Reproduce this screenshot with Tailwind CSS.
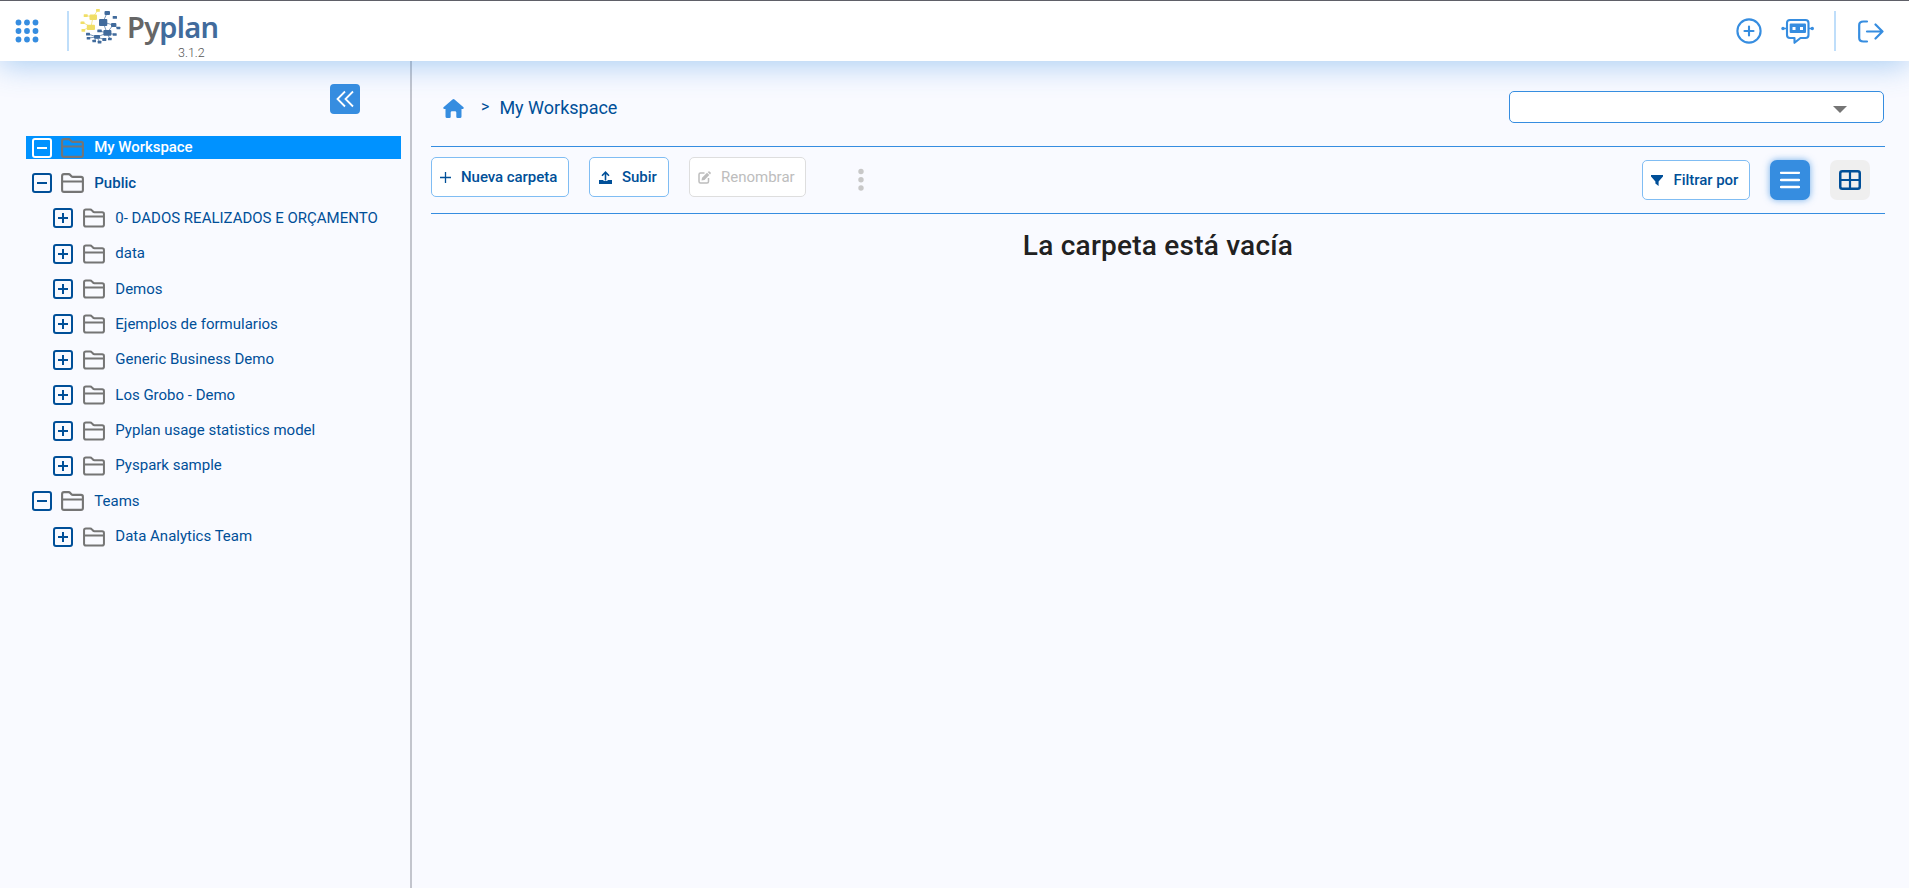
<!DOCTYPE html>
<html lang="es">
<head>
<meta charset="utf-8">
<title>Pyplan</title>
<script src="https://cdn.jsdelivr.net/npm/@tailwindcss/browser@4"></script>
</head>
<body class="h-screen overflow-hidden bg-[#f9faff] font-['Roboto',sans-serif] text-[#004f98] flex flex-col">
<svg class="hidden">
  <symbol id="folder" viewBox="0 0 23 20"><path d="M1.100 17V3Q1.100 1.100 3 1.100H7.500Q8.600 1.100 9.300 2L10.400 3.200Q11 3.900 12 3.900H20Q21.900 3.900 21.900 5.700V17Q21.900 18.900 20 18.900H3Q1.100 18.900 1.100 17ZM1.100 8.500H21.900" fill="none" stroke="#757575" stroke-width="2.100"/></symbol>
  <symbol id="minus" viewBox="0 0 20 20"><rect x="1" y="1" width="18" height="18" rx="2" fill="none" stroke="currentColor" stroke-width="2"/><path d="M5 10H15" stroke="currentColor" stroke-width="2"/></symbol>
  <symbol id="plus" viewBox="0 0 20 20"><rect x="1" y="1" width="18" height="18" rx="2" fill="none" stroke="currentColor" stroke-width="2"/><path d="M5 10H15M10 5V15" stroke="currentColor" stroke-width="2"/></symbol>
</svg>

<header class="relative z-10 h-[61px] shrink-0 bg-white border-t border-[#5f6068] shadow-[0_4px_30px_rgba(54,141,224,0.42)] flex items-start justify-between text-[#368de0]">
  <div class="flex items-start">
    <svg class="ml-[15px] mt-[18px] size-6" viewBox="0 0 24 24" fill="currentColor"><circle cx="3.500" cy="3.500" r="2.900"/><circle cx="12" cy="3.500" r="2.900"/><circle cx="20.500" cy="3.500" r="2.900"/><circle cx="3.500" cy="12" r="2.900"/><circle cx="12" cy="12" r="2.900"/><circle cx="20.500" cy="12" r="2.900"/><circle cx="3.500" cy="20.500" r="2.900"/><circle cx="12" cy="20.500" r="2.900"/><circle cx="20.500" cy="20.500" r="2.900"/></svg>
    <div class="ml-7 mt-[10px] h-10 w-[2px] bg-[#bfdefa]"></div>
    <svg class="ml-[11px] mt-[7px] w-[41px] h-9" viewBox="80 8 41 36">
      <path d="M91 27L93 17L98 10M82 22L91 27L83 30M93 17L86 15.500" stroke="#f0de66" fill="none" stroke-width=".7"/>
      <path d="M107 13L103 22L113 25L118 28M103 22L107 33L113 25M107 33L97 37L88 34M97 37L88 38M107 33L115 34.500M97 37L94 41M97 37L104 39.500M97 37L99.500 42M99.500 31L107 33L110 39" stroke="#416b9c" fill="none" stroke-width=".7"/>
      <g fill="#f0de66"><rect x="89.500" y="14.500" width="7.500" height="5.500" rx="1"/><rect x="86.800" y="24.700" width="8.200" height="5.200" rx="1"/><rect x="96" y="9" width="3.800" height="2.800" rx=".5"/><rect x="83.700" y="14.200" width="4" height="2.800" rx=".5"/><rect x="80.500" y="21.500" width="4" height="2.600" rx=".5"/><rect x="81.500" y="29" width="3.700" height="2.700" rx=".5"/></g>
      <g fill="#416b9c"><rect x="99" y="19" width="8.300" height="7" rx="1"/><rect x="104.500" y="11" width="5.500" height="4" rx="1"/><rect x="112.700" y="16" width="4.300" height="2.700" rx=".5"/><rect x="111" y="23" width="5.400" height="4" rx="1"/><rect x="116.500" y="26.700" width="3.800" height="2.500" rx=".5"/><rect x="103.400" y="30" width="8" height="5.700" rx="1"/><rect x="97.300" y="29.500" width="4.500" height="2.800" rx=".5"/><rect x="94" y="35" width="6" height="3.700" rx=".8"/><rect x="86" y="32.700" width="4" height="2.700" rx=".5"/><rect x="86.700" y="37" width="3.500" height="2.500" rx=".5"/><rect x="92.400" y="39.700" width="3.600" height="2.500" rx=".5"/><rect x="97.700" y="40.700" width="3.700" height="2.700" rx=".5"/><rect x="102.300" y="38" width="4" height="3" rx=".5"/><rect x="108" y="37.700" width="3.700" height="2.500" rx=".5"/><rect x="112.700" y="33.300" width="4" height="2.500" rx=".5"/></g>
    </svg>
    <div class="ml-[6px] mt-[10px] w-[94px]">
      <div class="h-[36px] leading-[31px] text-[29px] font-semibold tracking-[-0.700px] text-[#666] font-['Noto_Sans',sans-serif]">Py<span class="text-[#416b9c]">plan</span></div>
      <div class="pl-[51px] text-[12.500px] leading-3 font-light text-[#555]">3.1.2</div>
    </div>
  </div>
  <div class="flex items-start">
    <svg class="mt-[17px] size-[26px]" viewBox="0 0 26 26" fill="none" stroke="currentColor" stroke-width="2.100" stroke-linecap="round"><circle cx="13" cy="13" r="11.600"/><path d="M8.500 13H17.500M13 8.500V17.500"/></svg>
    <svg class="ml-[19px] mt-[17px] w-[33px] h-[27px]" viewBox="0 0 33 27" fill="none" stroke="currentColor" stroke-width="2.100"><path d="M9 2H24.500Q27.500 2 27.500 5V17Q27.500 20 24.500 20H19.500L13.500 24.800V20H9Q6 20 6 17V5Q6 2 9 2Z" stroke-linejoin="round"/><path d="M2 10.500H6M27 10.500H31" stroke-width="1.500"/><circle cx="2" cy="10.500" r="1.700" fill="currentColor" stroke="none"/><circle cx="31.300" cy="10.500" r="1.700" fill="currentColor" stroke="none"/><rect x="8.700" y="5.500" width="16.300" height="9.500" rx="1" fill="currentColor" stroke="none"/><path d="M11.500 9H14.500V12H11.500ZM19 9H22V12H19Z" fill="white" stroke="none"/></svg>
    <div class="ml-5 mt-[10px] h-10 w-[2px] bg-[#bfdefa]"></div>
    <svg class="ml-[22px] mr-[25px] mt-[19px] w-[26px] h-[23px]" viewBox="0 0 26 23" fill="none" stroke="currentColor" stroke-width="2.200" stroke-linecap="round" stroke-linejoin="round"><path d="M9 1.500H5.500Q1.200 1.500 1.200 5V18Q1.200 21.500 5.500 21.500H9M9 11.500H24.500M17.500 4.500L24.500 11.500L17.500 18.500"/></svg>
  </div>
</header>

<div class="flex flex-1 min-h-0">
  <aside class="w-[412px] shrink-0 border-r-2 border-[#c3c5cd] pl-[26px] pr-[9px]">
    <div class="flex justify-end pr-[41px] pt-[23px]">
      <button class="size-[30px] rounded-[4px] bg-[#368de0] grid place-items-center"><svg class="w-[18px] h-[18px]" viewBox="0 0 18 18" fill="none" stroke="white" stroke-width="1.800"><path d="M9 1.500L1.500 9L9 16.500M17 1.500L9.500 9L17 16.500"/></svg></button>
    </div>
    <nav class="pt-[22px] text-[15px] leading-[23px]">
      <div class="h-[23px] mb-[12.600px] bg-[#0092ff] text-white flex items-center pl-[6px]"><svg class="size-5"><use href="#minus"/></svg><svg class="ml-[9px] w-[23px] h-5"><use href="#folder"/></svg><span class="ml-[10.300px] font-medium tracking-[-0.050px]">My Workspace</span></div>
      <div class="h-[23px] mb-[12.350px] flex items-center pl-[6px]"><svg class="size-5"><use href="#minus"/></svg><svg class="ml-[9px] w-[23px] h-5"><use href="#folder"/></svg><span class="ml-[10.300px] font-medium">Public</span></div>
      <div class="h-[23px] mb-[12.350px] flex items-center pl-[27px]"><svg class="size-5"><use href="#plus"/></svg><svg class="ml-[10px] w-[22px] h-5"><use href="#folder"/></svg><span class="ml-[10.300px]">0- DADOS REALIZADOS E ORÇAMENTO</span></div>
      <div class="h-[23px] mb-[12.350px] flex items-center pl-[27px]"><svg class="size-5"><use href="#plus"/></svg><svg class="ml-[10px] w-[22px] h-5"><use href="#folder"/></svg><span class="ml-[10.300px]">data</span></div>
      <div class="h-[23px] mb-[12.350px] flex items-center pl-[27px]"><svg class="size-5"><use href="#plus"/></svg><svg class="ml-[10px] w-[22px] h-5"><use href="#folder"/></svg><span class="ml-[10.300px]">Demos</span></div>
      <div class="h-[23px] mb-[12.350px] flex items-center pl-[27px]"><svg class="size-5"><use href="#plus"/></svg><svg class="ml-[10px] w-[22px] h-5"><use href="#folder"/></svg><span class="ml-[10.300px]">Ejemplos de formularios</span></div>
      <div class="h-[23px] mb-[12.350px] flex items-center pl-[27px]"><svg class="size-5"><use href="#plus"/></svg><svg class="ml-[10px] w-[22px] h-5"><use href="#folder"/></svg><span class="ml-[10.300px]">Generic Business Demo</span></div>
      <div class="h-[23px] mb-[12.350px] flex items-center pl-[27px]"><svg class="size-5"><use href="#plus"/></svg><svg class="ml-[10px] w-[22px] h-5"><use href="#folder"/></svg><span class="ml-[10.300px]">Los Grobo - Demo</span></div>
      <div class="h-[23px] mb-[12.350px] flex items-center pl-[27px]"><svg class="size-5"><use href="#plus"/></svg><svg class="ml-[10px] w-[22px] h-5"><use href="#folder"/></svg><span class="ml-[10.300px]">Pyplan usage statistics model</span></div>
      <div class="h-[23px] mb-[12.350px] flex items-center pl-[27px]"><svg class="size-5"><use href="#plus"/></svg><svg class="ml-[10px] w-[22px] h-5"><use href="#folder"/></svg><span class="ml-[10.300px]">Pyspark sample</span></div>
      <div class="h-[23px] mb-[12.350px] flex items-center pl-[6px]"><svg class="size-5"><use href="#minus"/></svg><svg class="ml-[9px] w-[23px] h-5"><use href="#folder"/></svg><span class="ml-[10.300px]">Teams</span></div>
      <div class="h-[23px] flex items-center pl-[27px]"><svg class="size-5"><use href="#plus"/></svg><svg class="ml-[10px] w-[22px] h-5"><use href="#folder"/></svg><span class="ml-[10.300px]">Data Analytics Team</span></div>
    </nav>
  </aside>

  <main class="flex-1 pl-[19px] pr-6">
    <div class="h-[85px] flex items-start justify-between">
      <div class="flex items-center mt-[32px] h-[28px] pl-3">
        <svg class="w-[21px] h-[19px] mt-[3px]" viewBox="0 0 21 19" fill="#368de0"><path d="M9.500 .5Q10.500 -.3 11.500 .5L20.500 8.300Q21.200 9.500 20 10H18.500V17.500Q18.500 19 17 19H14.500Q13.300 19 13.300 17.800V13.500Q13.300 12.200 12 12.200H9Q7.700 12.200 7.700 13.500V17.800Q7.700 19 6.500 19H4Q2.500 19 2.500 17.500V10H1Q-.2 9.500 .5 8.300Z"/></svg>
        <span class="ml-[17px] text-[16px]">&gt;</span>
        <span class="ml-[10px] text-[18px]">My Workspace</span>
      </div>
      <div class="mt-[30px] mr-[1px] w-[375px] h-[32px] bg-white border border-[#368de0] rounded-[5px] flex items-center justify-end pr-9"><svg class="w-[14px] h-[7px] mt-[4px]" viewBox="0 0 14 7"><path d="M0 0H14L7 7Z" fill="#757575"/></svg></div>
    </div>
    <div class="h-[68px] border-y border-[#368de0] flex items-start justify-between text-[15px] font-medium">
      <div class="flex items-start pt-[10px]">
        <button class="w-[138px] h-10 bg-white border border-[#80bdf3] rounded-[5px] flex items-center pl-[8px]"><svg class="size-[11px]" viewBox="0 0 11 11"><path d="M0 5.500H11M5.500 0V11" stroke="currentColor" stroke-width="1.300"/></svg><span class="ml-[10px] tracking-[-0.050px]">Nueva carpeta</span></button>
        <button class="ml-5 w-[80px] h-10 bg-white border border-[#80bdf3] rounded-[5px] flex items-center pl-[9px]"><svg class="w-[13px] h-[13px]" viewBox="0 0 13 13"><path d="M0 9H4.500V10H8.500V9H13V13H0Z" fill="currentColor"/><path d="M6.500 9.500V1.500M3 4.700L6.500 1.200L10 4.700" fill="none" stroke="currentColor" stroke-width="1.600"/></svg><span class="ml-[10px] tracking-[-0.050px]">Subir</span></button>
        <button class="ml-5 w-[117px] h-10 bg-white border border-[#dedede] rounded-[5px] flex items-center pl-2 text-[#bdbdbd]"><svg class="size-[13px]" viewBox="0 0 13 13"><path d="M6.500 2H2.500Q1 2 1 3.500V10.500Q1 12 2.500 12H9Q10.500 12 10.500 10.500V7" fill="none" stroke="currentColor" stroke-width="1.500"/><path d="M9 1.800L11.300 4.100L6.500 9L3.500 9.500L4 6.700ZM9.700 1.100L10.500 .4Q11 0 11.500 .4L12.700 1.600Q13.100 2.100 12.700 2.600L12 3.400Z" fill="currentColor"/></svg><span class="ml-[10px] font-normal">Renombrar</span></button>
        <svg class="ml-[52px] mt-[11px] w-[6px] h-[24px]" viewBox="0 0 6 24" fill="#c8c8c8"><circle cx="3" cy="3.500" r="2.700"/><circle cx="3" cy="11.700" r="2.700"/><circle cx="3" cy="20" r="2.700"/></svg>
      </div>
      <div class="flex items-start pt-[13px] pr-[15px]">
        <button class="w-[108px] h-10 bg-white border border-[#80bdf3] rounded-[5px] flex items-center pl-2"><svg class="w-[12px] h-[11px]" viewBox="0 0 12 11"><path d="M0 0H12V1.500L7.600 6.500V11L4.400 8.500V6.500L0 1.500Z" fill="currentColor"/></svg><span class="ml-[10.500px] tracking-[-0.050px]">Filtrar por</span></button>
        <button class="ml-5 size-10 rounded-[7px] bg-[#368de0] shadow-[0_0_7px_rgba(54,141,224,0.7)] grid place-items-center"><svg class="w-5 h-[18px]" viewBox="0 0 20 18"><path d="M1 1.800H19M1 9H19M1 16H19" stroke="white" stroke-width="2.300" stroke-linecap="round"/></svg></button>
        <button class="ml-5 size-10 rounded-[7px] bg-[#efefef] grid place-items-center"><svg class="w-[22px] h-5" viewBox="0 0 22 20" fill="none" stroke="currentColor" stroke-width="2.500"><rect x="1.250" y="1.250" width="19.500" height="17.500" rx="2"/><path d="M11 1V19M1 10H21" stroke-width="2.200"/></svg></button>
      </div>
    </div>
    <h1 class="mt-[14px] text-center text-[28px] leading-[36px] tracking-[0.230px] font-medium text-[#212121]">La carpeta está vacía</h1>
  </main>
</div>
</body>
</html>
